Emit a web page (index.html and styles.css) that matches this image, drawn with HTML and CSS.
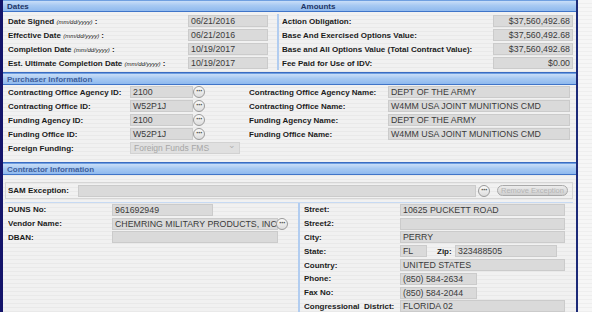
FILE: index.html
```html
<!DOCTYPE html>
<html>
  <head>
    <link rel="stylesheet" href="styles.css">
  </head>
  <body>
    <div class="panel">
      <!-- Dates / Amounts -->
      <div class="section">
        <div class="head">
          <span class="head-title">Dates</span>
          <span class="head-title amounts">Amounts</span>
        </div>
        <div class="dates">
          <div class="dates-left">
            <div class="row">
              <span class="label w-date">Date Signed <i>(mm/dd/yyyy)</i> :</span>
              <span class="field w80">06/21/2016</span>
            </div>
            <div class="row">
              <span class="label w-date">Effective Date <i>(mm/dd/yyyy)</i> :</span>
              <span class="field w80">06/21/2016</span>
            </div>
            <div class="row">
              <span class="label w-date">Completion Date <i>(mm/dd/yyyy)</i> :</span>
              <span class="field w80">10/19/2017</span>
            </div>
            <div class="row">
              <span class="label w-date">Est. Ultimate Completion Date <i>(mm/dd/yyyy)</i> :</span>
              <span class="field w80">10/19/2017</span>
            </div>
          </div>
          <div class="dates-right">
            <div class="row">
              <span class="label w-amt">Action Obligation:</span>
              <span class="field w80 num">$37,560,492.68</span>
            </div>
            <div class="row">
              <span class="label w-amt">Base And Exercised Options Value:</span>
              <span class="field w80 num">$37,560,492.68</span>
            </div>
            <div class="row">
              <span class="label w-amt">Base and All Options Value (Total Contract Value):</span>
              <span class="field w80 num">$37,560,492.68</span>
            </div>
            <div class="row">
              <span class="label w-amt">Fee Paid for Use of IDV:</span>
              <span class="field w80 num">$0.00</span>
            </div>
          </div>
        </div>
      </div>

      <!-- Purchaser Information -->
      <div class="section">
        <div class="head">
          <span class="head-title light">Purchaser Information</span>
        </div>
        <div class="purchaser">
          <div class="prow">
            <span class="label">Contracting Office Agency ID:</span>
            <span class="field">2100</span>
            <span class="dots">&middot;&middot;&middot;</span>
            <span></span>
            <span class="label">Contracting Office Agency Name:</span>
            <span class="field">DEPT OF THE ARMY</span>
          </div>
          <div class="prow">
            <span class="label">Contracting Office ID:</span>
            <span class="field">W52P1J</span>
            <span class="dots">&middot;&middot;&middot;</span>
            <span></span>
            <span class="label">Contracting Office Name:</span>
            <span class="field">W4MM USA JOINT MUNITIONS CMD</span>
          </div>
          <div class="prow">
            <span class="label">Funding Agency ID:</span>
            <span class="field">2100</span>
            <span class="dots">&middot;&middot;&middot;</span>
            <span></span>
            <span class="label">Funding Agency Name:</span>
            <span class="field">DEPT OF THE ARMY</span>
          </div>
          <div class="prow">
            <span class="label">Funding Office ID:</span>
            <span class="field">W52P1J</span>
            <span class="dots">&middot;&middot;&middot;</span>
            <span></span>
            <span class="label">Funding Office Name:</span>
            <span class="field">W4MM USA JOINT MUNITIONS CMD</span>
          </div>
          <div class="row">
            <span class="label w-pur">Foreign Funding:</span>
            <span class="select">Foreign Funds FMS<span class="caret">&#8964;</span></span>
          </div>
        </div>
      </div>

      <!-- Contractor Information -->
      <div class="section last">
        <div class="head">
          <span class="head-title light">Contractor Information</span>
        </div>
        <div class="contractor">
          <div class="sam">
            <span class="label w-sam">SAM Exception:</span>
            <span class="field w-saminput"></span>
            <span class="dots">&middot;&middot;&middot;</span>
            <span class="remove">Remove Exception</span>
          </div>
          <div class="vendor">
            <div class="vendor-left">
              <div class="crow">
                <span class="label w-ven">DUNS No:</span>
                <span class="field w-duns">961692949</span>
              </div>
              <div class="crow">
                <span class="label w-ven">Vendor Name:</span>
                <span class="field w-vname">CHEMRING MILITARY PRODUCTS, INC</span>
                <span class="dots over">&middot;&middot;&middot;</span>
              </div>
              <div class="crow">
                <span class="label w-ven">DBAN:</span>
                <span class="field w-vname"></span>
              </div>
            </div>
            <div class="vendor-right">
              <div class="crow">
                <span class="label w-addr">Street:</span>
                <span class="field w-addrin">10625 PUCKETT ROAD</span>
              </div>
              <div class="crow">
                <span class="label w-addr">Street2:</span>
                <span class="field w-addrin"></span>
              </div>
              <div class="crow">
                <span class="label w-addr">City:</span>
                <span class="field w-addrin">PERRY</span>
              </div>
              <div class="crow">
                <span class="label w-addr">State:</span>
                <span class="field w-state">FL</span>
                <span class="label zip">Zip:</span>
                <span class="field w-zip">323488505</span>
              </div>
              <div class="crow">
                <span class="label w-addr">Country:</span>
                <span class="field w-addrin">UNITED STATES</span>
              </div>
              <div class="crow">
                <span class="label w-addr">Phone:</span>
                <span class="field w-phone">(850) 584-2634</span>
              </div>
              <div class="crow">
                <span class="label w-addr">Fax No:</span>
                <span class="field w-phone">(850) 584-2044</span>
              </div>
              <div class="crow">
                <span class="label w-addr">Congressional&nbsp; District:</span>
                <span class="field w-addrin">FLORIDA 02</span>
              </div>
            </div>
          </div>
        </div>
      </div>
    </div>
  </body>
</html>
```

FILE: styles.css
```css
* {
  margin: 0;
  padding: 0;
  box-sizing: border-box;
}

body {
  width: 592px;
  height: 312px;
  overflow: hidden;
  font-family: "Liberation Sans", Arial, sans-serif;
  background: repeating-linear-gradient(
    to bottom,
    #f6f6f6 0,
    #f6f6f6 3px,
    #eeeeee 3px,
    #eeeeee 4px
  );
}

.panel {
  width: 578px;
  border-left: 3px solid #14146a;
  border-right: 2px solid #1c2a78;
  background: repeating-linear-gradient(
    to bottom,
    #f1f1f1 0,
    #f1f1f1 3px,
    #e9e9e9 3px,
    #e9e9e9 4px
  );
}

.section {
  border-bottom: 1px solid #3a6cc2;
  padding-bottom: 2px;
}

.section.last {
  border-bottom: none;
}

/* Header bars */
.head {
  height: 12px;
  display: flex;
  align-items: center;
  background: linear-gradient(#c9def8, #a7c9f2 45%, #8fb9ee);
  border-top: 1px solid #6f9fe0;
  border-bottom: 1px solid #3f74c8;
  padding-left: 4px;
}

.head-title {
  font-size: 8px;
  font-weight: bold;
  color: #1d3566;
}

.head-title.light {
  color: #3e5f9c;
}

.head-title.amounts {
  margin-left: 272px;
}

/* Generic pieces */
.row {
  display: flex;
  align-items: center;
  height: 14px;
}

.label {
  font-size: 8px;
  font-weight: bold;
  color: #1b1b1b;
  white-space: nowrap;
  overflow: hidden;
}

.label i {
  font-size: 6px;
  font-weight: normal;
}

.field {
  display: block;
  height: 12px;
  line-height: 11px;
  background: #dadada;
  border: 1px solid #cbcbcb;
  font-size: 8.8px;
  color: #3a3a3a;
  padding-left: 2px;
  white-space: nowrap;
  overflow: hidden;
}

.field.num {
  text-align: right;
  padding-right: 2px;
}

.dots {
  width: 12px;
  height: 12px;
  border: 1px solid #9a9a9a;
  border-radius: 6px;
  background: linear-gradient(#fbfbfb, #dcdcdc);
  font-size: 9px;
  line-height: 9px;
  font-weight: bold;
  color: #555;
  text-align: center;
  letter-spacing: -1px;
}

.w80 {
  width: 80px;
}

/* Dates */
.dates {
  display: flex;
  padding-top: 2px;
}

.dates-left {
  width: 274px;
  padding-left: 5px;
}

.dates-right {
  width: 296px;
  padding-left: 3px;
  border-left: 2px solid #b2cdf0;
}

.w-date {
  width: 180px;
}

.w-amt {
  width: 211px;
}

/* Purchaser */
.purchaser {
  padding: 0 0 5px 5px;
}

.prow {
  display: grid;
  grid-template-columns: 122px 63px 12px 44px 139px 182px;
  align-items: center;
  height: 14px;
}

.w-pur {
  width: 122px;
}

.select {
  position: relative;
  width: 110px;
  height: 12px;
  line-height: 11px;
  background: #e0e0e0;
  border: 1px solid #d2d2d2;
  font-size: 8.5px;
  color: #a6a6a6;
  padding-left: 3px;
}

.caret {
  position: absolute;
  right: 3px;
  top: -3px;
  font-size: 9px;
  color: #b0b0b0;
}

/* Contractor */
.contractor {
  padding: 7px 2px 0 2px;
}

.sam {
  display: flex;
  align-items: center;
  height: 17px;
  border: 1px solid #d6d6d6;
  padding-left: 2px;
  margin-bottom: 3px;
  width: 568px;
}

.w-sam {
  width: 70px;
}

.w-saminput {
  width: 398px;
  margin-right: 2px;
}

.remove {
  margin-left: 7px;
  width: 71px;
  height: 11px;
  border: 1px solid #a9a9a9;
  border-radius: 6px;
  background: linear-gradient(#ececec, #cfcfcf);
  font-size: 7.5px;
  line-height: 9px;
  color: #b4b4b4;
  text-align: center;
  white-space: nowrap;
  overflow: hidden;
}

.vendor {
  display: flex;
  border-top: 1px solid #c7daf3;
  width: 568px;
}

.vendor-left {
  width: 293px;
  padding-left: 3px;
}

.vendor-right {
  flex: 1;
  border-left: 2px solid #b2cdf0;
  padding-left: 4px;
}

.crow {
  display: flex;
  align-items: center;
  height: 13.8px;
}

.w-ven {
  width: 104px;
}

.w-duns {
  width: 101px;
}

.w-vname {
  width: 166px;
}

.dots.over {
  margin-left: -2px;
}

.w-addr {
  width: 96px;
}

.w-addrin {
  width: 165px;
}

.w-state {
  width: 27px;
}

.zip {
  width: 28px;
  padding-left: 10px;
}

.w-zip {
  width: 102px;
}

.w-phone {
  width: 77px;
}
```
